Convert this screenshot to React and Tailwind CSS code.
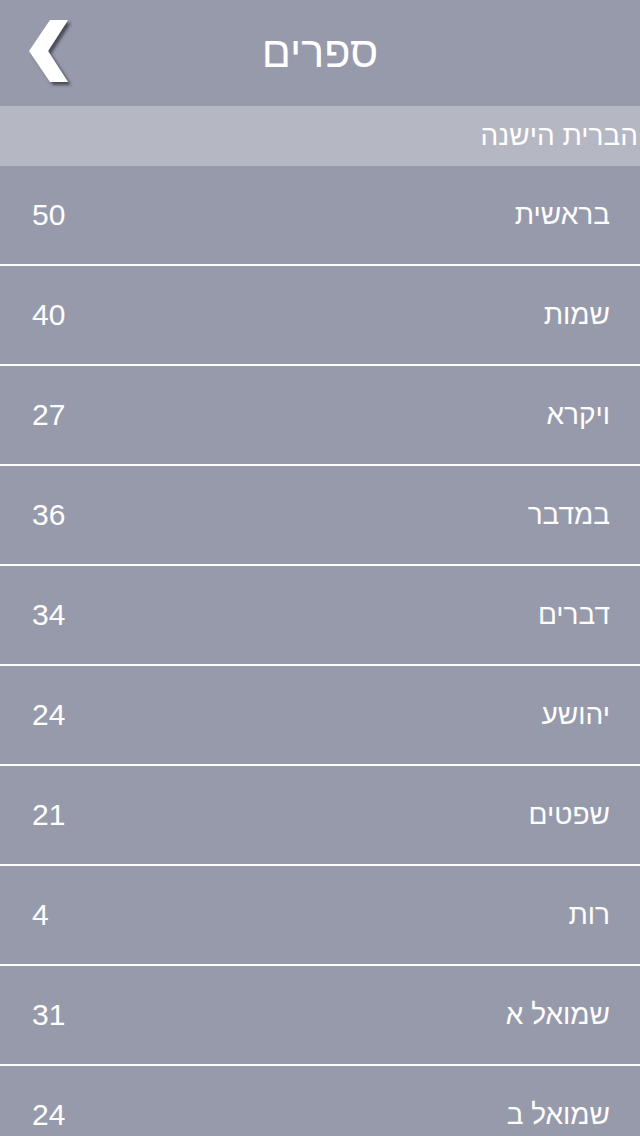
const books = [
  { name: "בראשית", chapters: 50 },
  { name: "שמות", chapters: 40 },
  { name: "ויקרא", chapters: 27 },
  { name: "במדבר", chapters: 36 },
  { name: "דברים", chapters: 34 },
  { name: "יהושע", chapters: 24 },
  { name: "שפטים", chapters: 21 },
  { name: "רות", chapters: 4 },
  { name: "שמואל א", chapters: 31 },
  { name: "שמואל ב", chapters: 24 },
];

export default function App() {
  return (
    <div
      className="w-[640px] h-[1136px] overflow-hidden bg-[#979aab] text-white"
      style={{ fontFamily: '"Liberation Sans", "DejaVu Sans", sans-serif' }}
    >
      {/* Header */}
      <div className="relative h-[106px] flex items-center justify-center">
        <button className="absolute left-[24px] top-[16px] w-[52px] h-[72px]">
          <svg width="52" height="72" viewBox="24 16 52 72">
            <defs>
              <filter id="sh" x="-30%" y="-30%" width="160%" height="160%">
                <feDropShadow dx="3" dy="3" stdDeviation="1.6" floodColor="#2a2c38" floodOpacity="0.7" />
              </filter>
            </defs>
            <polygon points="50,20 68,20 48,51 68,82 50,82 29,51" fill="#ffffff" filter="url(#sh)" />
          </svg>
        </button>
        <h1 dir="rtl" className="text-[43px] leading-none -mt-[2px]">ספרים</h1>
      </div>

      {/* Section header */}
      <div dir="rtl" className="h-[60px] bg-[#b5b7c3] flex items-center pr-[2px]">
        <span className="text-[28px] leading-none text-white">הברית הישנה</span>
      </div>

      {/* Books */}
      {books.map((b) => (
        <div key={b.name}>
          <div dir="rtl" className="h-[98px] flex items-center justify-between pr-[30px] pl-[32px]">
            <span className="text-[28px] leading-none">{b.name}</span>
            <span className="text-[30px] leading-none">{b.chapters}</span>
          </div>
          <div className="h-[2px] bg-white" />
        </div>
      ))}
    </div>
  );
}
